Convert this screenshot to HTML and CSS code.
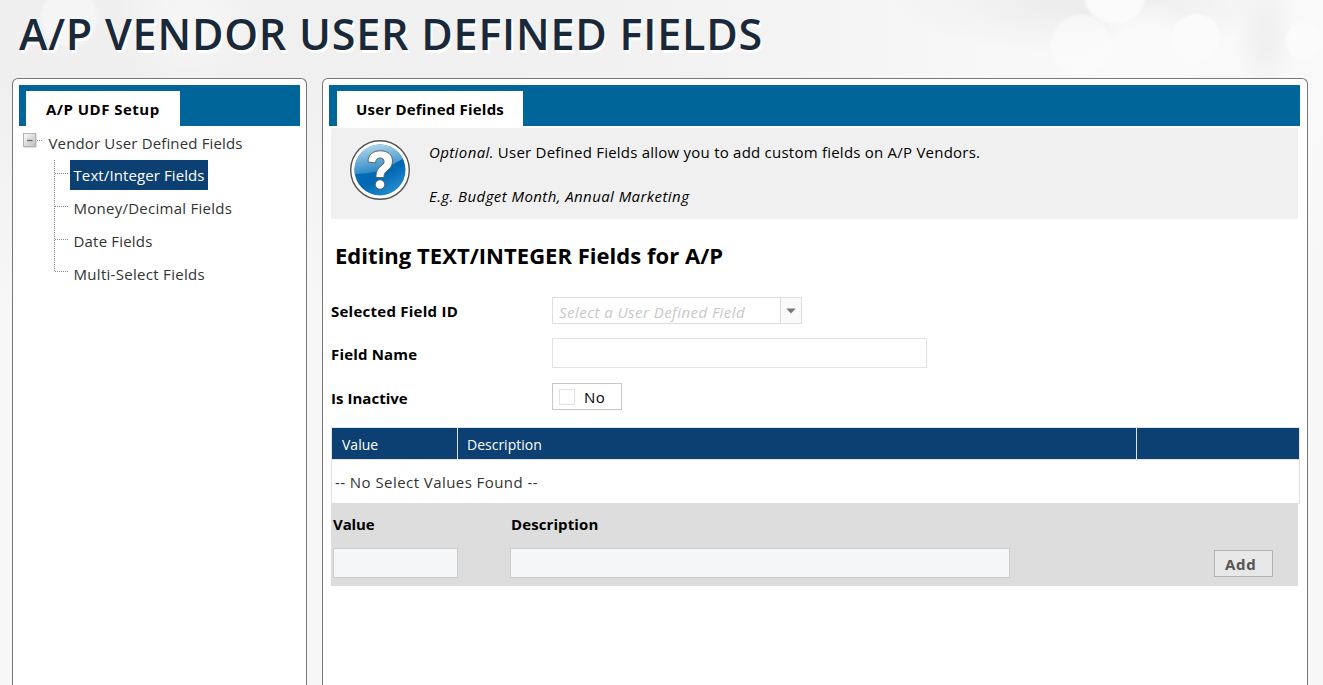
FILE: index.html
```
<!DOCTYPE html>
<html lang="en">
<head>
<meta charset="utf-8">
<title>A/P Vendor User Defined Fields</title>
<link rel="stylesheet" href="styles.css">
</head>
<body>
<h1 class="page-title">A/P VENDOR USER DEFINED FIELDS</h1>
<main class="columns">
  <section class="panel panel-side">
    <div class="tab-bar"><div class="tab tab-setup">A/P UDF Setup</div></div>
    <div class="tree">
      <div class="tree-root">
        <svg class="tree-toggle" width="20" height="15" viewBox="0 0 20 15">
          <defs><linearGradient id="tg" x1="0" y1="0" x2="1" y2="1"><stop offset="0" stop-color="#fff"/><stop offset="1" stop-color="#b9b9b9"/></linearGradient></defs>
          <rect x=".5" y=".5" width="12" height="13" fill="url(#tg)" stroke="#b4b4b4"/>
          <path d="M13.500 1V14.500H1" fill="none" stroke="#ddd"/>
          <path d="M4 7.500H9.500" stroke="#777" stroke-width="1.500"/>
          <path d="M14 7.500H20" stroke="#888" stroke-dasharray="1 1"/>
        </svg>
        <span class="root-label">Vendor User Defined Fields</span>
      </div>
      <div class="tree-branch">
        <svg class="tree-lines" width="16" height="113" viewBox="0 0 16 113">
          <path d="M.5 0V112" />
          <path d="M1 13.500H14M1 46.500H15M1 79.500H15M1 111.500H15" />
        </svg>
        <ul class="tree-list">
          <li><a class="node selected">Text/Integer Fields</a></li>
          <li><a class="node node-money">Money/Decimal Fields</a></li>
          <li><a class="node node-date">Date Fields</a></li>
          <li><a class="node node-multi">Multi-Select Fields</a></li>
        </ul>
      </div>
    </div>
  </section>
  <section class="panel panel-main">
    <div class="tab-bar"><div class="tab tab-fields">User Defined Fields</div></div>
    <div class="content">
      <div class="info">
        <svg class="info-icon" width="60" height="60" viewBox="0 0 60 60">
          <defs>
            <linearGradient id="ball" x1=".2" y1="0" x2=".8" y2="1"><stop offset="0" stop-color="#0a6fb8"/><stop offset=".6" stop-color="#0068b3"/><stop offset="1" stop-color="#2b93d1"/></linearGradient>
            <linearGradient id="gloss" x1=".3" y1="0" x2=".6" y2="1"><stop offset="0" stop-color="#b5d8ec"/><stop offset="1" stop-color="#1c7fc0"/></linearGradient>
          </defs>
          <circle cx="30" cy="30" r="29.300" fill="#fff" stroke="#555050" stroke-width="1.400"/>
          <circle cx="30" cy="30" r="25.500" fill="url(#ball)"/>
          <path d="M4.800 34A25.500 25.500 0 0 1 53 19C46 22 40 27 31 30C21 33 13 34 4.800 34Z" fill="url(#gloss)"/>
          <path d="M18 22C18 14.500 23 10.800 30.500 10.800C38 10.800 42.500 15 42.500 21C42.500 26 40 28.500 37 31C34.500 33 34 34 34 37.500H26C26 31.500 27 29.500 30.500 26.500C33 24.500 34 23.500 34 21.300C34 19.300 32.500 18 30.200 18C27.500 18 25.800 19.500 25.500 23Z" fill="#fff" stroke="#56636b"/>
          <circle cx="30" cy="44.500" r="4.700" fill="#fff" stroke="#56636b"/>
        </svg>
        <div class="info-text">
          <p><em class="optional">Optional.</em> <span class="allow">User Defined Fields allow you to add custom fields on A/P Vendors.</span></p>
          <p class="example"><em>E.g. Budget Month, Annual Marketing</em></p>
        </div>
      </div>
      <h2 class="editing">Editing TEXT/INTEGER Fields for A/P</h2>
      <div class="form">
        <label class="label-id">Selected Field ID</label>
        <div class="combo"><span class="placeholder">Select a User Defined Field</span><span class="combo-arrow"><svg width="10" height="6" viewBox="0 0 10 6"><path d="M.3 .5H9.700L5 5.500Z" fill="#777"/></svg></span></div>
        <label class="label-name">Field Name</label>
        <div class="text-box"></div>
        <label class="label-inactive">Is Inactive</label>
        <div class="toggle"><span class="check"></span><span>No</span></div>
      </div>
      <div class="grid">
        <div class="grid-head"><span>Value</span><span>Description</span><span></span></div>
        <div class="grid-empty">-- No Select Values Found --</div>
      </div>
      <div class="add-row">
        <div class="field field-value"><label>Value</label><div class="add-input"></div></div>
        <div class="field field-desc"><label>Description</label><div class="add-input"></div></div>
        <button class="add-button">Add</button>
      </div>
    </div>
  </section>
</main>
</body>
</html>
```
FILE: styles.css
```
* { box-sizing: border-box; margin: 0; padding: 0; }

body {
  height: 685px;
  overflow: hidden;
  display: flex;
  flex-direction: column;
  font: 15px/30px "Open Sans", "Noto Sans", sans-serif;
  color: #000;
  background:
    radial-gradient(circle at 1115px -7px, rgba(252,252,252,.9) 29px, transparent 33px),
    radial-gradient(circle at 1081px 45px, rgba(251,251,251,.7) 28px, transparent 32px),
    radial-gradient(circle at 1196px 38px, #fbfbfb 22px, transparent 26px),
    radial-gradient(circle at 1304px 41px, rgba(252,252,252,.8) 16px, transparent 20px),
    radial-gradient(circle at 1145px 60px, rgba(250,250,250,.9) 35px, transparent 60px),
    radial-gradient(circle at 69px 18px, rgba(247,247,247,.8) 26px, transparent 30px),
    radial-gradient(circle at 190px 20px, rgba(246,246,246,.9) 20px, transparent 70px),
    radial-gradient(ellipse 30px 70px at 1265px 35px, #f0f0f0 20%, transparent),
    radial-gradient(ellipse 200px 55px at 1090px 0, #ededed 20%, transparent),
    linear-gradient(transparent 70px, #f7f7f7 300px),
    linear-gradient(90deg, #efefef 0, #f1f1f1 600px, #f5f5f5 850px, #f8f8f8 1000px, #f9f9f9 100%);
}

.page-title {
  height: 78px;
  padding-left: 19px;
  font-size: 43px;
  line-height: 67px;
  font-weight: 600;
  letter-spacing: .8px;
  color: #1a2939;
  text-shadow: 2px 3px 0 #fff;
  white-space: nowrap;
}

.columns { flex: 1; display: flex; gap: 15px; padding-left: 12px; }

.panel {
  border: 1px solid #777;
  border-bottom: 0;
  border-radius: 6px 6px 0 0;
  background: #fff;
  padding: 6px 6px 0;
}
.panel-side { width: 295px; }
.panel-main { width: 986px; padding-right: 7px; }

.tab-bar { display: flex; align-items: flex-end; height: 41px; background: #069; padding-left: 7px; }
.panel-main .tab-bar { padding-left: 8px; }
.tab { height: 35px; padding-left: 20px; line-height: 36px; font-weight: 700; background: #fff; }
.tab-setup { width: 154px; letter-spacing: .48px; }
.tab-fields { width: 186px; padding-left: 19px; letter-spacing: .21px; }

.tree { padding: 2px 0 0 4px; color: #333; white-space: nowrap; }
.tree-root { display: flex; height: 32px; line-height: 31px; letter-spacing: .15px; }
.tree-toggle { margin: 5px 5.5px 0 0; }
.tree-branch { display: flex; padding-left: 31px; }
.tree-lines { flex: none; fill: none; stroke: #888; stroke-dasharray: 1 1; }
.tree-list { list-style: none; display: flex; flex-direction: column; gap: 3px; }
.tree-list li { height: 30px; }
.node { display: inline-block; height: 30px; padding: 0 3px 0 3.5px; line-height: 31px; }
.node-money { letter-spacing: .26px; }
.node-date { letter-spacing: .19px; }
.node-multi { letter-spacing: .3px; }
.selected { width: 138px; background: #0d4072; color: #fff; letter-spacing: .1px; }

.content { padding: 2px 0 0 2px; }
.info { display: flex; width: 967px; height: 91px; padding: 12px 19px; background: #f0f0f0; }
.info-icon { flex: none; margin-right: 19px; }
.info-text { padding-top: 1px; line-height: 23px; }
.info-text p { height: 22px; }
.info-text .example { margin-top: 22px; letter-spacing: .42px; }
.optional { letter-spacing: .4px; }
.allow { letter-spacing: .23px; }

.editing { padding-left: 4px; margin-top: 20px; font-size: 22px; line-height: 32px; font-weight: 700; letter-spacing: .03px; }

.form {
  display: grid;
  grid-template-columns: 221px auto;
  grid-template-rows: 27px 30px 29px;
  justify-content: start;
  justify-items: start;
  margin-top: 26px;
  row-gap: 14px;
}
.form label { font-weight: 700; align-self: center; line-height: 30px; }
.form .label-id { letter-spacing: .25px; margin-bottom: -1px; }
.form .label-name { letter-spacing: .17px; margin-bottom: -2px; }
.form .label-inactive { letter-spacing: .03px; margin-bottom: -3px; }
.combo { display: flex; align-self: start; width: 250px; height: 27px; border: 1px solid #dedede; }
.placeholder { width: 227px; padding-left: 6px; line-height: 29px; font-style: italic; letter-spacing: .46px; color: #c8c8c8; white-space: nowrap; }
.combo-arrow { flex: 1; display: flex; align-items: center; justify-content: center; background: #fafafa; border-left: 1px solid #dedede; }
.text-box { width: 375px; height: 30px; border: 1px solid #e3e3e3; }
.toggle { display: flex; align-self: start; align-items: center; gap: 9px; width: 70px; height: 27px; margin-top: 1px; padding-left: 6px; border: 1px solid #c8c8c8; letter-spacing: .5px; }
.check { width: 16px; height: 16px; border: 1px solid #e2e2e2; }

.grid { width: 969px; margin-top: 16px; border: 1px solid #e2e2e2; }
.grid-head { display: grid; grid-template-columns: 126px 679px 1fr; height: 32px; background: #0d4072; color: #fff; border-bottom: 1px solid #e2e2e2; font-size: 14px; line-height: 33px; }
.grid-head span { padding-left: 9px; border-right: 1px solid #e2e2e2; }
.grid-head span:first-child { padding-left: 10px; }
.grid-head span:last-child { border: 0; }
.grid-empty { height: 43px; padding-left: 3px; line-height: 44px; letter-spacing: .44px; color: #333; }

.add-row { display: flex; width: 967px; height: 83px; margin-top: -1px; background: #ddd; padding: 0 25px 0 2px; position: relative; }
.field { padding-top: 6px; }
.field label { display: block; height: 39px; line-height: 31px; font-weight: 700; }
.field-value { width: 177px; letter-spacing: -.1px; }
.field-desc { width: 500px; letter-spacing: .1px; }
.field-desc label { padding-left: 1px; }
.add-input { height: 30px; border: 1px solid #ccc; background: #f5f6f8; }
.field-value .add-input { width: 125px; }
.add-button {
  width: 59px;
  height: 27px;
  margin: 47px 0 0 auto;
  padding-left: 10px;
  border: 1px solid #b3b3b3;
  background: #e8e8e8;
  color: #555;
  font: 700 15px/27px "Open Sans", sans-serif;
  letter-spacing: .7px;
  text-align: left;
}
```
